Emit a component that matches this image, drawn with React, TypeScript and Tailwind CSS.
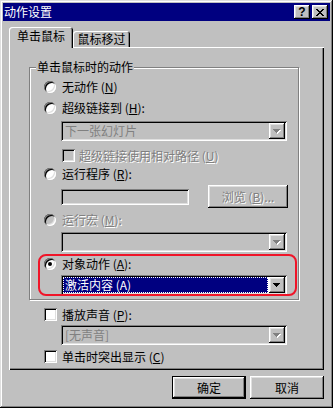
import React from "react";

const raised =
  "shadow-[inset_-1px_-1px_#000,inset_1px_1px_#fff,inset_-2px_-2px_#808080,inset_2px_2px_#dfdfdf]";
const sunken =
  "shadow-[inset_1px_1px_#808080,inset_-1px_-1px_#fff,inset_2px_2px_#000,inset_-2px_-2px_#dfdfdf]";
const emboss = "text-[#808080] [text-shadow:1px_1px_0_#fff]";

function U({ k }: { k: string }) {
  return <span className="underline underline-offset-[1px]">{k}</span>;
}

function Radio({ checked, disabled }: { checked?: boolean; disabled?: boolean }) {
  return (
    <span
      className={`w-[12px] h-[12px] rounded-full shrink-0 flex items-center justify-center ${
        disabled ? "bg-[#c0c0c0]" : "bg-white"
      } ${sunken}`}
    >
      {checked && <span className="w-[4px] h-[4px] rounded-full bg-black" />}
    </span>
  );
}

function Check({ disabled }: { disabled?: boolean }) {
  return (
    <span
      className={`w-[13px] h-[13px] shrink-0 ${disabled ? "bg-[#c0c0c0]" : "bg-white"} ${sunken}`}
    />
  );
}

function Arrow({ disabled }: { disabled?: boolean }) {
  return (
    <svg width="8" height="5" viewBox="0 0 8 5" shapeRendering="crispEdges">
      {disabled && <path d="M1 1h7L4.5 5z" fill="#fff" />}
      <path d="M0 0h7L3.5 4z" fill={disabled ? "#808080" : "#000"} />
    </svg>
  );
}

function Combo({
  text,
  disabled,
  selected,
}: {
  text?: React.ReactNode;
  disabled?: boolean;
  selected?: boolean;
}) {
  return (
    <div
      className={`w-[226px] h-[20px] flex p-[2px] ${sunken} ${
        selected ? "bg-white" : "bg-[#c0c0c0]"
      }`}
    >
      {selected ? (
        <div className="flex-1 mr-[1px] bg-[#000080] text-white border border-dotted border-[#ffffff] flex items-center pl-[1px] leading-[12px]">
          {text}
        </div>
      ) : (
        <div className="flex-1 flex items-center pl-[2px] leading-[12px] text-[#808080]">
          {text}
        </div>
      )}
      <div className={`w-[16px] h-full bg-[#c0c0c0] flex items-center justify-center ${raised}`}>
        <Arrow disabled={disabled} />
      </div>
    </div>
  );
}

function CloseGlyph() {
  const rects = [
    [0, 0], [6, 0],
    [1, 1], [5, 1],
    [2, 2], [4, 2],
    [3, 3],
    [2, 4], [4, 4],
    [1, 5], [5, 5],
    [0, 6], [6, 6],
  ];
  return (
    <svg width="8" height="7" viewBox="0 0 8 7" shapeRendering="crispEdges">
      {rects.map(([x, y], i) => (
        <rect key={i} x={x} y={y} width="2" height="1" fill="#000" />
      ))}
    </svg>
  );
}

export default function App() {
  return (
    <div
      className={`w-[333px] h-[408px] bg-[#c0c0c0] p-[3px] flex flex-col text-[12px] text-black font-['Noto_Sans_CJK_SC','Noto_Sans',sans-serif] shadow-[inset_-1px_-1px_#000,inset_1px_1px_#dfdfdf,inset_-2px_-2px_#808080,inset_2px_2px_#fff]`}
    >
      {/* Title bar */}
      <div className="h-[18px] bg-[#000080] flex items-center justify-between pl-[1px] pr-[2px]">
        <span className="text-white leading-[12px]">动作设置</span>
        <div className="flex gap-[2px]">
          <div className={`w-[16px] h-[14px] bg-[#c0c0c0] flex items-center justify-center ${raised}`}>
            <span className="font-bold leading-[12px] text-[12px] font-['Liberation_Sans',sans-serif]">?</span>
          </div>
          <div className={`w-[16px] h-[14px] bg-[#c0c0c0] flex items-center justify-center ${raised}`}>
            <CloseGlyph />
          </div>
        </div>
      </div>

      {/* Body */}
      <div className="pt-[6px] pl-[6px] flex flex-col">
        {/* Tabs */}
        <div className="flex items-end h-[20px]">
          <div className="relative z-10 w-[64px] h-[21px] mb-[-1px] bg-[#c0c0c0] rounded-t-[3px] flex justify-center pt-[3px] leading-[12px] shadow-[inset_1px_1px_#fff,inset_-1px_0_#000,inset_-2px_0_#808080]">
            单击鼠标
          </div>
          <div className="w-[57px] h-[16px] bg-[#c0c0c0] rounded-t-[3px] flex justify-center pt-[2px] leading-[12px] shadow-[inset_1px_1px_#fff,inset_-1px_0_#000,inset_-2px_0_#808080]">
            鼠标移过
          </div>
        </div>

        {/* Panel */}
        <div className="w-[315px] h-[323px] flex flex-col shadow-[inset_1px_1px_#fff,inset_-1px_-1px_#000,inset_-2px_-2px_#808080]">
          {/* Group box */}
          <div className="relative ml-[20px] mt-[20px] w-[270px] h-[233px] border border-[#808080] shadow-[inset_1px_1px_#fff,1px_1px_#fff]">
            <span className="absolute left-[6px] top-[-7px] px-[1px] bg-[#c0c0c0] leading-[12px]">
              单击鼠标时的动作
            </span>
            <div className="flex flex-col pl-[14px]">
              <div className="mt-[13px] h-[12px] flex items-center gap-[6px] leading-[12px]">
                <Radio />
                <span>
                  无动作 (<U k="N" />)
                </span>
              </div>
              <div className="mt-[9px] h-[12px] flex items-center gap-[6px] leading-[12px]">
                <Radio />
                <span>
                  超级链接到 (<U k="H" />):
                </span>
              </div>
              <div className="mt-[7px] ml-[17px]">
                <Combo text="下一张幻灯片" disabled />
              </div>
              <div className="mt-[8px] ml-[18px] h-[13px] flex items-center gap-[4px] leading-[12px]">
                <Check disabled />
                <span className={emboss}>
                  超级链接使用相对路径 (<U k="U" />)
                </span>
              </div>
              <div className="mt-[6px] h-[12px] flex items-center gap-[6px] leading-[12px]">
                <Radio />
                <span>
                  运行程序 (<U k="R" />):
                </span>
              </div>
              <div className="mt-[5px] ml-[17px] h-[23px] flex items-center">
                <div className={`w-[128px] h-[16px] bg-[#c0c0c0] ${sunken}`} />
                <div
                  className={`ml-[19px] w-[80px] h-[23px] bg-[#c0c0c0] flex items-center justify-center leading-[12px] ${raised}`}
                >
                  <span className={emboss}>
                    浏览 (<U k="B" />)...
                  </span>
                </div>
              </div>
              <div className="mt-[6px] h-[12px] flex items-center gap-[6px] leading-[12px]">
                <Radio disabled />
                <span className={emboss}>
                  运行宏 (<U k="M" />):
                </span>
              </div>
              <div className="mt-[6px] ml-[17px]">
                <Combo disabled />
              </div>
              <div className="mt-[6px] h-[12px] flex items-center gap-[6px] leading-[12px]">
                <Radio checked />
                <span>
                  对象动作 (<U k="A" />):
                </span>
              </div>
              <div className="mt-[5px] ml-[17px]">
                <Combo text="激活内容 (A)" selected />
              </div>
            </div>
            {/* red annotation */}
            <div className="absolute left-[8px] top-[186px] w-[259px] h-[42px] border-2 border-[#f01428] rounded-[8px] pointer-events-none" />
          </div>

          <div className="mt-[8px] ml-[35px] h-[13px] flex items-center gap-[5px] leading-[12px]">
            <Check />
            <span>
              播放声音 (<U k="P" />):
            </span>
          </div>
          <div className="mt-[4px] ml-[52px]">
            <Combo text="[无声音]" disabled />
          </div>
          <div className="mt-[5px] ml-[35px] h-[13px] flex items-center gap-[5px] leading-[12px]">
            <Check />
            <span>
              单击时突出显示 (<U k="C" />)
            </span>
          </div>
        </div>

        {/* Buttons */}
        <div className="w-[315px] mt-[6px] flex justify-end gap-[4px]">
          <div className="w-[74px] h-[23px] border border-black">
            <div
              className={`w-full h-full bg-[#c0c0c0] flex items-center justify-center leading-[12px] ${raised}`}
            >
              确定
            </div>
          </div>
          <div
            className={`w-[74px] h-[23px] bg-[#c0c0c0] flex items-center justify-center leading-[12px] ${raised}`}
          >
            取消
          </div>
        </div>
      </div>
    </div>
  );
}
